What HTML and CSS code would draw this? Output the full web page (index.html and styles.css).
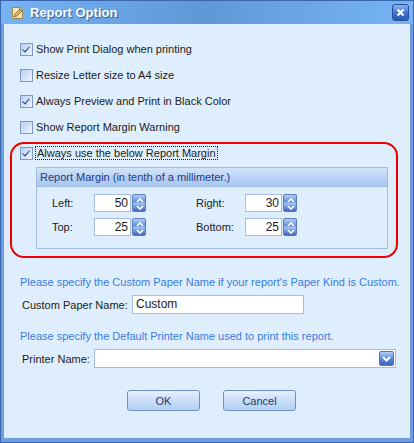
FILE: index.html
```html
<!DOCTYPE html>
<html lang="en">
<head>
    <meta charset="UTF-8" />
    <title>Report Option</title>
    <link rel="stylesheet" href="styles.css">
</head>
<body>
    <div class="window">
        <div class="titlebar">
            <svg class="title-icon" width="13" height="14" viewBox="0 0 13 14">
                <path d="M1.5 1.5h7l3 3v8h-10z" fill="#f3e7b8" stroke="#9c8748"/>
                <path d="M8.5 1.5v3h3" fill="#fff8dc" stroke="#9c8748"/>
                <path d="M3 11l1-3 5-5 2 2-5 5z" fill="#e2b65a" stroke="#7a5a20" stroke-width="0.8"/>
            </svg>
            <span class="title-text">Report Option</span>
            <button class="close-btn">
                <svg width="9" height="9" viewBox="0 0 9 9"><path d="M1.5 1.5l6 6M7.5 1.5l-6 6" stroke="#fff" stroke-width="2.2"/></svg>
            </button>
        </div>

        <div class="content">
            <label class="check-row"><span class="check checked"></span>Show Print Dialog when printing</label>
            <label class="check-row"><span class="check"></span>Resize Letter size to A4 size</label>
            <label class="check-row"><span class="check checked"></span>Always Preview and Print in Black Color</label>
            <label class="check-row"><span class="check"></span>Show Report Margin Warning</label>
            <label class="check-row"><span class="check checked"></span><span class="focused">Always use the below Report Margin</span></label>

            <div class="group">
                <div class="group-head">Report Margin (in tenth of a millimeter.)</div>
                <div class="group-body">
                    <span class="lbl">Left:</span>
                    <div class="spin"><span class="spin-val">50</span><span class="spin-btn"></span></div>
                    <span></span>
                    <span class="lbl">Right:</span>
                    <div class="spin"><span class="spin-val">30</span><span class="spin-btn"></span></div>

                    <span class="lbl">Top:</span>
                    <div class="spin"><span class="spin-val">25</span><span class="spin-btn"></span></div>
                    <span></span>
                    <span class="lbl">Bottom:</span>
                    <div class="spin"><span class="spin-val">25</span><span class="spin-btn"></span></div>
                </div>
            </div>

            <div class="hint hint-paper">Please specify the Custom Paper Name if your report's Paper Kind is Custom.</div>
            <div class="field-row">
                <span class="field-lbl paper-lbl">Custom Paper Name:</span>
                <div class="text-box paper-box">Custom</div>
            </div>

            <div class="hint hint-printer">Please specify the Default Printer Name used to print this report.</div>
            <div class="field-row">
                <span class="field-lbl printer-lbl">Printer Name:</span>
                <div class="text-box combo"><span class="combo-btn"></span></div>
            </div>

            <div class="actions">
                <button class="btn">OK</button>
                <button class="btn">Cancel</button>
            </div>

            <div class="highlight"></div>
        </div>
    </div>
</body>
</html>
```

FILE: styles.css
```css
body {
    margin: 0;
    font-family: 'Liberation Sans', Arial, sans-serif;
    font-size: 11px;
    color: #1b1b1b;
}

.window {
    width: 414px;
    height: 443px;
    box-sizing: border-box;
    background: #6d9de0;
    border: 1px solid #3a66b0;
    padding: 0 3px 4px 3px;
    display: flex;
    flex-direction: column;
}

.titlebar {
    height: 23px;
    display: flex;
    align-items: center;
    background: linear-gradient(to right, #77b3f2 0%, #6aa5e6 25%, #5f98d6 50%, #6ba7e8 75%, #77b4f3 100%);
    margin: 0 -3px;
    padding: 0 4px 0 10px;
}

.title-icon {
    margin-right: 6px;
}

.title-text {
    color: #fff;
    font-weight: bold;
    font-size: 13px;
    text-shadow: 1px 1px 1px #2b5a9c;
    flex: 1;
}

.close-btn {
    width: 17px;
    height: 17px;
    padding: 0;
    border: 1px solid #2a4f9a;
    border-radius: 3px;
    background: linear-gradient(#8ab7f2, #3f6fcc 55%, #2c58b8);
    display: flex;
    align-items: center;
    justify-content: center;
}

.content {
    flex: 1;
    position: relative;
    background: #dfeefd;
    padding: 12px 0 0 16px;
    display: flex;
    flex-direction: column;
}

.check-row {
    height: 26px;
    display: flex;
    align-items: center;
}

.check {
    width: 11px;
    height: 11px;
    border: 1px solid #7b99c4;
    background: linear-gradient(135deg, #b9cfee, #eef4fd);
    margin-right: 3px;
    position: relative;
}

.check.checked::after {
    content: "";
    position: absolute;
    left: 3px;
    top: 1px;
    width: 3px;
    height: 6px;
    border: solid #1d3a8c;
    border-width: 0 1.5px 1.5px 0;
    transform: rotate(40deg);
}

.focused {
    outline: 1px dotted #222;
    padding: 0 1px;
}

.group {
    margin: 1px 0 0 16px;
    width: 350px;
    height: 80px;
    border: 1px solid #9dbde6;
}

.group-head {
    height: 18px;
    line-height: 18px;
    padding-left: 3px;
    color: #1f3b8a;
    border-bottom: 1px solid #9dbde6;
    background: linear-gradient(#d3e4f9, #b5d0f2 60%, #a9c7ee);
}

.group-body {
    display: grid;
    grid-template-columns: 42px 52px 50px 49px 52px;
    grid-template-rows: 18px 19px;
    row-gap: 5px;
    padding: 7px 0 0 15px;
    align-items: center;
}

.spin {
    display: flex;
    height: 18px;
}

.spin-val {
    width: 37px;
    box-sizing: border-box;
    background: #fff;
    border: 1px solid #a3bde3;
    text-align: right;
    padding-right: 2px;
    line-height: 16px;
    font-size: 12px;
}

.spin-btn {
    width: 14px;
    margin-left: 1px;
    border-radius: 2px;
    background:
        url("data:image/svg+xml,%3Csvg xmlns='http://www.w3.org/2000/svg' width='14' height='18'%3E%3Cpath d='M4 7l3-3 3 3M4 11l3 3 3-3' fill='none' stroke='%23fff' stroke-width='1.6'/%3E%3C/svg%3E"),
        linear-gradient(#b3cff3, #5e8ad6 45%, #a9c7f0 50%, #3e66bd);
    border: 1px solid #5879be;
    box-sizing: border-box;
}

.hint {
    color: #3a7ce0;
}

.hint-paper {
    margin-top: 27px;
}

.hint-printer {
    margin-top: 16px;
}

.field-row {
    display: flex;
    align-items: center;
    padding-left: 2px;
    margin-top: 7px;
}

.field-lbl {
    white-space: nowrap;
}

.paper-lbl {
    width: 110px;
}

.printer-lbl {
    width: 72px;
}

.text-box {
    height: 19px;
    box-sizing: border-box;
    background: #fff;
    border: 1px solid #a3bde3;
    padding-left: 3px;
    line-height: 17px;
    font-size: 12px;
}

.paper-box {
    width: 172px;
}

.field-row .combo {
    width: 302px;
    display: flex;
    justify-content: flex-end;
    padding: 1px;
}

.combo-btn {
    width: 15px;
    height: 15px;
    border-radius: 2px;
    border: 1px solid #4e74c0;
    box-sizing: border-box;
    background:
        url("data:image/svg+xml,%3Csvg xmlns='http://www.w3.org/2000/svg' width='13' height='13'%3E%3Cpath d='M3 5l3.5 3.5L10 5' fill='none' stroke='%23fff' stroke-width='2'/%3E%3C/svg%3E"),
        linear-gradient(#b3cff3, #5e8ad6 50%, #3e66bd);
}

.actions {
    display: flex;
    gap: 23px;
    padding-left: 107px;
    margin-top: 22px;
}

.btn {
    width: 73px;
    height: 21px;
    border: 1px solid #7090c4;
    border-radius: 3px;
    background: linear-gradient(#e8f1fd, #c9ddf7 50%, #b4cff3);
    color: #1e3a78;
    font-family: 'Liberation Sans', Arial, sans-serif;
    font-size: 11px;
    padding: 0;
}

.highlight {
    position: absolute;
    left: 6px;
    top: 118px;
    width: 384px;
    height: 112px;
    border: 2px solid #ee0000;
    border-radius: 14px;
    pointer-events: none;
}
```
